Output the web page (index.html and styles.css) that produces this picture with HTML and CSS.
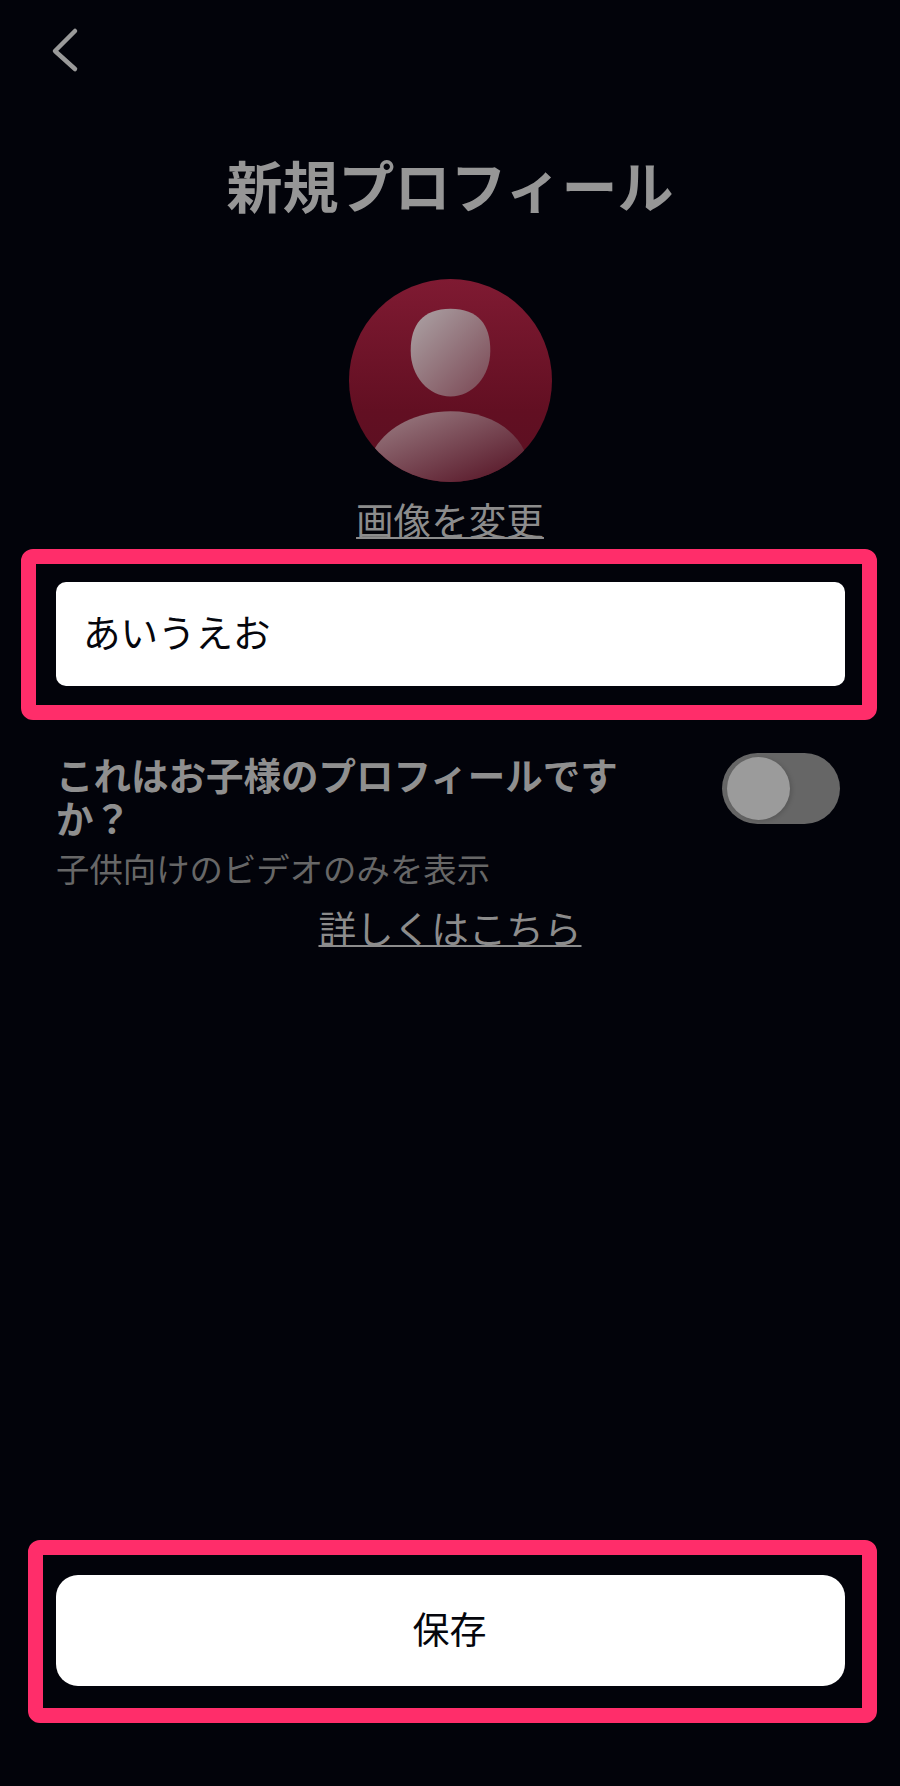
FILE: index.html
```html
<!DOCTYPE html>
<html lang="ja">
<head>
    <meta charset="UTF-8">
    <meta name="viewport" content="width=device-width, initial-scale=1.0">
    <title>新規プロフィール</title>
    <link rel="stylesheet" href="styles.css">
</head>
<body>

    <!-- Header -->
    <header>
        <a class="back-button" href="#" aria-label="戻る">
            <svg width="30" height="46" viewBox="0 0 30 46">
                <path d="M25 4 L5 24 L25 42" fill="none" stroke="#9a9a9a" stroke-width="4.5" stroke-linecap="round" stroke-linejoin="round"/>
            </svg>
        </a>
        <h1 class="title">新規プロフィール</h1>
    </header>

    <!-- Avatar -->
    <section class="avatar-section">
        <svg class="avatar" width="203" height="203" viewBox="0 0 204 204">
            <defs>
                <linearGradient id="avatarBg" x1="0" y1="0" x2="0" y2="1">
                    <stop offset="0" stop-color="#7f1a32"/>
                    <stop offset="0.65" stop-color="#620f22"/>
                    <stop offset="1" stop-color="#5a1022"/>
                </linearGradient>
                <linearGradient id="headFill" x1="0.1" y1="0.05" x2="0.95" y2="0.95">
                    <stop offset="0" stop-color="#a99da0"/>
                    <stop offset="1" stop-color="#7c4a56"/>
                </linearGradient>
                <linearGradient id="bodyFill" x1="0.1" y1="0.1" x2="0.85" y2="0.95">
                    <stop offset="0" stop-color="#95757c"/>
                    <stop offset="1" stop-color="#5a1a2b"/>
                </linearGradient>
                <clipPath id="avatarClip">
                    <circle cx="102" cy="102" r="102"/>
                </clipPath>
            </defs>
            <circle cx="102" cy="102" r="102" fill="url(#avatarBg)"/>
            <path d="M102 30 C130 30 142 46 142 72 C142 98 124 118 102 118 C80 118 62 98 62 72 C62 46 74 30 102 30 Z" fill="url(#headFill)"/>
            <path clip-path="url(#avatarClip)" d="M26 170 C40 148 68 133 102 133 C136 133 164 148 176 172 L176 204 L26 204 Z" fill="url(#bodyFill)"/>
        </svg>
        <a class="text-link" href="#">画像を変更</a>
    </section>

    <!-- Name field -->
    <div class="highlight name-box">
        <div class="name-input">あいうえお</div>
    </div>

    <!-- Kids profile -->
    <section class="kids-section">
        <div class="kids-row">
            <div class="kids-label">これはお子様のプロフィールですか？</div>
            <div class="toggle"><div class="toggle-knob"></div></div>
        </div>
        <p class="kids-note">子供向けのビデオのみを表示</p>
        <div class="more-link"><a class="text-link" href="#">詳しくはこちら</a></div>
    </section>

    <!-- Save -->
    <footer>
        <div class="highlight save-box">
            <button class="save-button">保存</button>
        </div>
    </footer>

</body>
</html>
```
FILE: styles.css
```css
/* General Styles */
html, body {
    height: 100%;
}

body {
    margin: 0;
    background-color: #02030a;
    color: #8f8f8f;
    font-family: "Noto Sans CJK JP", "Noto Sans", sans-serif;
    display: flex;
    flex-direction: column;
    min-height: 1786px;
    box-sizing: border-box;
}

/* Header */
.back-button {
    display: block;
    width: 30px;
    height: 46px;
    margin: 27px 0 0 50px;
}

.back-button svg {
    display: block;
}

.title {
    margin: 81px 0 0;
    font-size: 56px;
    line-height: 60px;
    font-weight: 700;
    text-align: center;
    color: #969696;
}

/* Avatar */
.avatar-section {
    display: flex;
    flex-direction: column;
    align-items: center;
    margin-top: 65px;
}

.avatar {
    display: block;
}

.text-link {
    font-size: 37.6px;
    line-height: 44px;
    color: #8c8c8c;
    text-decoration: underline;
    text-decoration-thickness: 2px;
    text-underline-offset: 2px;
}

.avatar-section .text-link {
    margin-top: 15px;
}

/* Pink annotation boxes */
.highlight {
    border: 15px solid #ff2d6a;
    border-radius: 12px;
    box-sizing: border-box;
    margin-right: 23px;
}

.name-box {
    margin-top: 8px;
    margin-left: 21px;
    padding: 18px 17px 19px 20px;
}

.name-input {
    height: 104px;
    background-color: #fff;
    border-radius: 10px;
    padding-left: 27px;
    font-size: 37.5px;
    line-height: 98px;
    color: #05060c;
}

/* Kids profile */
.kids-section {
    padding: 33px 60px 0 56px;
}

.kids-row {
    display: flex;
    justify-content: space-between;
    align-items: flex-start;
}

.kids-label {
    width: 570px;
    font-size: 37.5px;
    line-height: 43px;
    font-weight: 700;
    color: #8f8f8f;
    margin-top: -1px;
}

.toggle {
    width: 118px;
    height: 71px;
    padding: 4px 5px;
    box-sizing: border-box;
    background-color: #666;
    border-radius: 36px;
}

.toggle-knob {
    width: 63px;
    height: 63px;
    border-radius: 50%;
    background-color: #9b9b9b;
    box-shadow: 2px 1px 4px rgba(0, 0, 0, 0.15);
}

.kids-note {
    margin: 10px 0 0;
    font-size: 33.4px;
    line-height: 40px;
    color: #676767;
}

.more-link {
    margin: 17px -60px 0 -56px;
    text-align: center;
}

/* Save button */
footer {
    margin-top: auto;
    margin-bottom: 63px;
}

.save-box {
    margin-left: 28px;
    padding: 20px 17px 22px 13px;
}

.save-button {
    display: block;
    width: 100%;
    height: 111px;
    padding: 0 2px 6px 0;
    border: none;
    border-radius: 22px;
    background-color: #fff;
    color: #05060c;
    font-family: inherit;
    font-size: 37px;
}
```
